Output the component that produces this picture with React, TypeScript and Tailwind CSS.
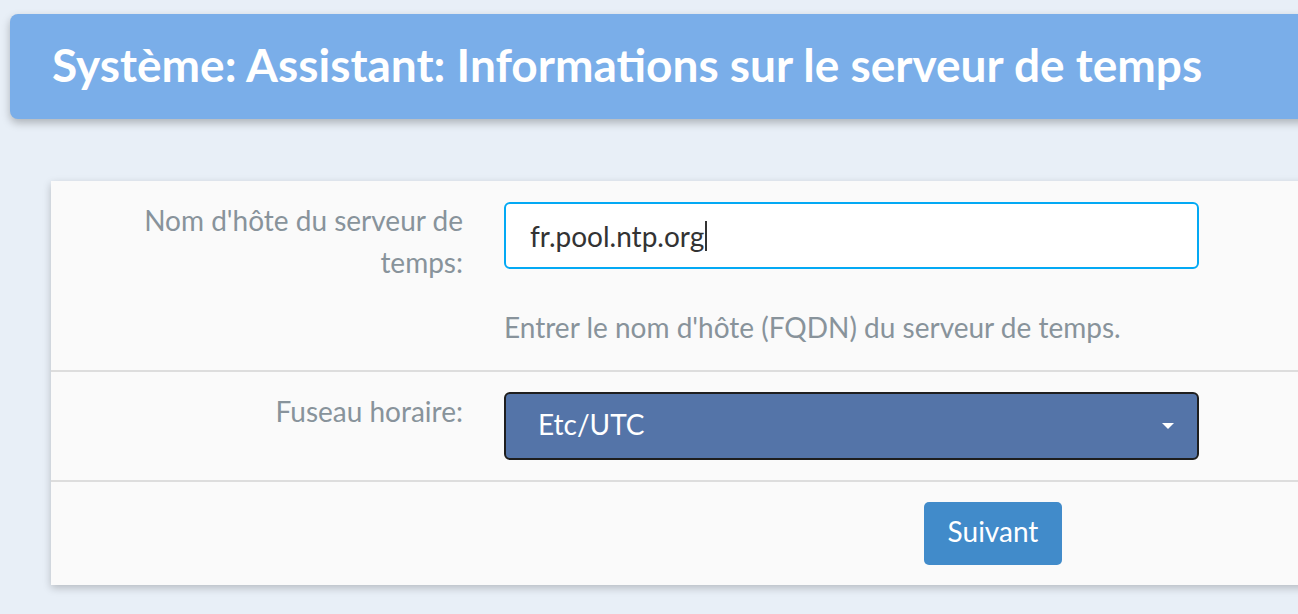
const font = { fontFamily: 'Lato, "Noto Sans", sans-serif' };

export default function App() {
  return (
    <div
      className="relative h-[614px] w-full overflow-hidden bg-[#e8eff7] pt-[14px]"
      style={font}
    >
      <div className="ml-[10px] flex h-[105px] w-[1400px] items-center rounded-l-[8px] bg-[#7aaee9] pl-[42px] shadow-[0_4px_8px_rgba(0,0,0,0.25)]">
        <h1 className="-mt-[3px] text-[46px] font-bold leading-none text-white">
          Système: Assistant: Informations sur le serveur de temps
        </h1>
      </div>

      <div className="ml-[51px] mt-[62px] w-[1400px] bg-[#fafafa] shadow-[0_3px_8px_rgba(0,0,0,0.22)]">
        {/* hostname */}
        <div className="flex border-b-2 border-[#dddddd]">
          <div className="w-[433px] shrink-0 pr-[21px] pt-[18px] text-right text-[28px] leading-[42px] text-[#88939b]">
            Nom d'hôte du serveur de
            <br />
            temps:
          </div>
          <div className="pl-[20px] pt-[21px] pb-[22px]">
            <div className="flex h-[67px] w-[695px] items-center rounded-[6px] border-2 border-[#03a9f4] bg-white pl-[24px] text-[28px] text-[#333333]">
              fr.pool.ntp.org
              <span className="ml-[1px] inline-block h-[30px] w-[2px] bg-[#333333]" />
            </div>
            <p className="mt-[37px] text-[28px] leading-[42px] text-[#88939b]">
              Entrer le nom d'hôte (FQDN) du serveur de temps.
            </p>
          </div>
        </div>

        {/* timezone */}
        <div className="flex border-b-2 border-[#dddddd]">
          <div className="w-[433px] shrink-0 pr-[21px] pt-[18px] text-right text-[28px] leading-[42px] text-[#88939b]">
            Fuseau horaire:
          </div>
          <div className="py-[20px] pl-[20px]">
            <div className="flex h-[68px] w-[695px] items-center justify-between rounded-[6px] border-2 border-[#1e1e1e] bg-[#5474a8] pl-[32px] pr-[23px] text-[28px] text-white">
              <span className="-mt-[4px]">Etc/UTC</span>
              <svg width="12" height="6" viewBox="0 0 12 6">
                <path d="M0 0h12L6 6z" fill="#ffffff" />
              </svg>
            </div>
          </div>
        </div>

        <div className="flex">
          <div className="w-[433px] shrink-0" />
          <div className="py-[20px] pl-[440px]">
            <button className="h-[63px] w-[138px] rounded-[5px] bg-[#418bca] pb-[6px] text-[28px] text-white">
              Suivant
            </button>
          </div>
        </div>
      </div>
    </div>
  );
}
